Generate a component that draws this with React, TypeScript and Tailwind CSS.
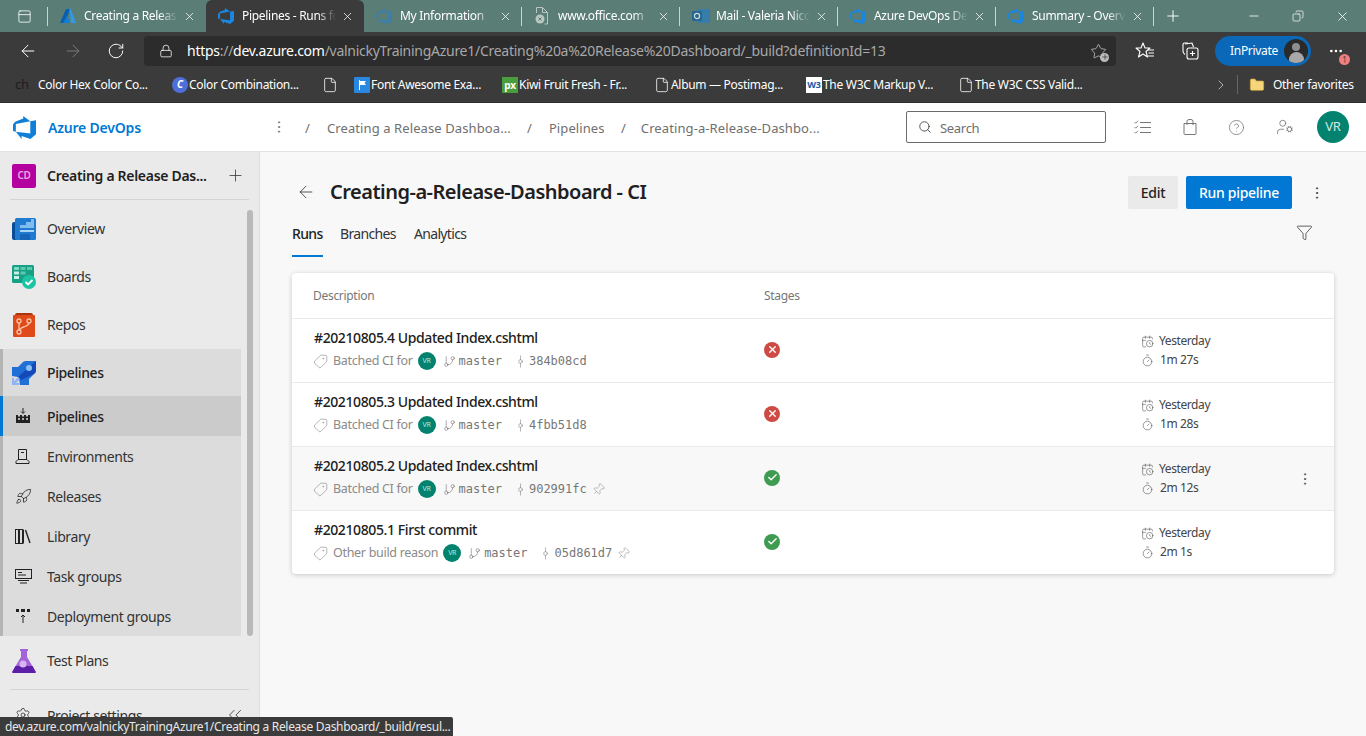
import React from "react";
import {
  ArrowLeft, ArrowRight, RotateCw, Lock, Star, Plus, Minus, X, Copy, File, Search,
  CircleHelp, UserCog, EllipsisVertical, Ellipsis, Funnel, Tag, GitBranch, GitCommitVertical, Pin, CalendarClock,
  Timer, Settings, ChevronsLeft, ChevronRight, Check, PanelTop, Rocket, Folder,
} from "lucide-react";

const DEVOPS = "M0 8.877L2.247 5.91l8.405-3.416V.022l7.37 5.393L2.966 8.338v8.225L0 15.707zm24-4.45v14.651l-5.753 4.9-9.303-3.057v3.056l-5.978-7.416 15.057 1.798V5.415z";

function DevOps({ size = 16, color = "#0f7fd8" }: { size?: number; color?: string }) {
  return (
    <svg width={size} height={size} viewBox="0 0 24 24" className="shrink-0">
      <path d={DEVOPS} fill={color} />
    </svg>
  );
}

function AzureA() {
  return (
    <svg width="16" height="16" viewBox="0 0 16 16" className="shrink-0">
      <path d="M6 1h4L5 15H0z" fill="#0a5fb0" />
      <path d="M9.5 1h1.2L16 15h-5z" fill="#2f9be8" />
      <path d="M7 8l3 7H3z" fill="#0f7fd8" />
    </svg>
  );
}

function OutlookIcon() {
  return (
    <svg width="18" height="16" viewBox="0 0 18 16" className="shrink-0 opacity-70">
      <rect x="5" y="1" width="13" height="14" rx="1" fill="#2b7cbf" />
      <rect x="0" y="3" width="10" height="10" rx="1" fill="#0f5f9e" />
      <circle cx="5" cy="8" r="2.6" fill="none" stroke="#fff" strokeWidth="1.2" />
    </svg>
  );
}

function BlockedFile() {
  return (
    <svg width="16" height="18" viewBox="0 0 16 18" fill="none" stroke="#b9c6c2" className="shrink-0">
      <path d="M2.5 6V.5h6l5 5V17h-3" />
      <path d="M8.5.5v5h5" />
      <circle cx="6" cy="12" r="4.5" fill="#b9c6c2" stroke="none" />
      <path d="M4.5 10.5l3 3M7.5 10.5l-3 3" stroke="#5a7d75" />
    </svg>
  );
}

function TabIcon({ kind }: { kind: string }) {
  if (kind === "azure") return <AzureA />;
  if (kind === "devops") return <DevOps size={16} color="#1a86e0" />;
  if (kind === "dim") return <DevOps size={16} color="#3d7fa8" />;
  if (kind === "outlook") return <OutlookIcon />;
  return <BlockedFile />;
}

const tabs = [
  { t: "Creating a Release Dashboard", k: "azure", sep: false },
  { t: "Pipelines - Runs for Creating", k: "devops", active: true, sep: false },
  { t: "My Information", k: "dim", sep: true },
  { t: "www.office.com", k: "file", sep: true },
  { t: "Mail - Valeria Nicolau", k: "outlook", sep: true },
  { t: "Azure DevOps Demo", k: "devops", sep: true },
  { t: "Summary - Overview", k: "devops", sep: true },
];

function BrowserTab({ t, k, active, sep }: { t: string; k: string; active?: boolean; sep?: boolean }) {
  return (
    <div className={`relative flex h-[32px] w-[158px] items-center pl-[12px] pr-[10px] ${active ? "rounded-t-[6px] bg-[#3b3b3b]" : ""}`}>
      <div className="flex w-[24px] shrink-0 items-center"><TabIcon kind={k} /></div>
      <div className="w-[94px] overflow-hidden whitespace-nowrap text-[12px] text-white [mask-image:linear-gradient(to_right,black_80%,transparent)]">{t}</div>
      <X size={13} strokeWidth={1.4} className="ml-auto shrink-0 text-white" />
      {sep ? <div className="absolute right-0 top-[7px] h-[19px] w-px bg-[#c7d6d2]" /> : null}
    </div>
  );
}

function TitleBar() {
  return (
    <div className="flex h-[32px] items-center bg-[#5a7d75]">
      <div className="flex w-[47px] items-center pl-[17px]"><PanelTop size={15} strokeWidth={1.3} className="text-white" /></div>
      <div className="h-[19px] w-px bg-[#c7d6d2]" />
      {tabs.map((x) => <BrowserTab key={x.t} {...x} />)}
      <Plus size={18} strokeWidth={1.3} className="ml-[10px] text-white" />
      <div className="ml-auto flex items-center gap-[31px] pr-[16px] text-white">
        <Minus size={14} strokeWidth={1.4} />
        <Copy size={12} strokeWidth={1.4} className="-scale-x-100" />
        <X size={15} strokeWidth={1.3} />
      </div>
    </div>
  );
}

function FavBar() {
  return (
    <svg width="20" height="20" viewBox="0 0 20 20" fill="none" stroke="#fff" strokeWidth="1.1" className="shrink-0">
      <path d="M8 2l2 5h5l-4 3.5 1.5 5.5L8 13l-4.5 3L5 10.5 1 7h5z" strokeLinejoin="round" />
      <path d="M13 9h6M13.5 12h5.5M13 15h6" />
    </svg>
  );
}

function CollectionsIcon() {
  return (
    <svg width="20" height="20" viewBox="0 0 20 20" fill="none" stroke="#fff" strokeWidth="1.1" className="shrink-0">
      <path d="M8 2H4.5A1.5 1.5 0 0 0 3 3.5V10c0 2 1 3 2 3.5" />
      <path d="M5 3l7-1 1.5 4" />
      <rect x="7" y="7" width="11" height="11" rx="2" />
      <path d="M12.5 10v5M10 12.5h5" />
    </svg>
  );
}

function Toolbar() {
  return (
    <div className="flex h-[38px] items-center bg-[#3b3b3b] text-white">
      <div className="flex w-[144px] shrink-0 items-center pl-[18px]">
        <ArrowLeft size={20} strokeWidth={1.2} />
        <ArrowRight size={20} strokeWidth={1.2} className="ml-[25px] text-[#7b7b7b]" />
        <RotateCw size={18} strokeWidth={1.3} className="ml-[24px]" />
      </div>
      <div className="flex h-[30px] w-[972px] items-center rounded-[4px] bg-[#2c2c2c] pl-[15px] pr-[9px]">
        <Lock size={14} strokeWidth={1.3} />
        <div className="mb-[2px] ml-[14px] whitespace-nowrap text-[14px] tracking-[-0.27px] text-[#a8a8a8]">
          <span className="text-white">https</span>://<span className="text-white">dev.azure.com</span>/valnickyTrainingAzure1/Creating%20a%20Release%20Dashboard/_build?definitionId=13
        </div>
        <div className="relative ml-auto">
          <Star size={17} strokeWidth={1.1} className="text-[#c8c8c8]" />
          <div className="absolute -bottom-[2px] -right-[2px] flex h-[9px] w-[9px] items-center justify-center rounded-full bg-[#bdbdbd]"><Plus size={8} strokeWidth={2} className="text-[#2c2c2c]" /></div>
        </div>
      </div>
      <div className="ml-[19px]"><FavBar /></div>
      <div className="ml-[25px]"><CollectionsIcon /></div>
      <div className="ml-[15px] flex h-[30px] w-[96px] items-center rounded-full bg-[#0b67b8] pl-[15px] pr-[3px]">
        <span className="mb-[1px] text-[12px]">InPrivate</span>
        <div className="ml-auto flex h-[24px] w-[24px] flex-col items-center overflow-hidden rounded-full bg-[#2a2a2a]">
          <div className="mt-[4px] h-[9px] w-[8px] rounded-full bg-[#8e8e8e]" />
          <div className="mt-[1px] h-[12px] w-[15px] rounded-t-full bg-[#a8a8a8]" />
        </div>
      </div>
      <div className="relative ml-[17px]">
        <Ellipsis size={16} strokeWidth={2} />
        <div className="absolute -bottom-[6px] -right-[6px] flex h-[11px] w-[11px] items-center justify-center rounded-full bg-[#f08080] text-[8px] leading-none text-[#3b3b3b]">1</div>
      </div>
    </div>
  );
}

function Fav({ kind }: { kind: string }) {
  if (kind === "doc") return <File size={16} strokeWidth={1.2} className="shrink-0 text-white" />;
  if (kind === "ch") return <span className="w-[22px] shrink-0 text-[13px] text-[#1b1b1b]">ch</span>;
  if (kind === "c") return <span className="flex h-[16px] w-[16px] shrink-0 items-center justify-center rounded-full bg-[#4f6fd8] text-[10px] font-bold italic text-white">C</span>;
  if (kind === "flag") return <span className="flex h-[16px] w-[16px] shrink-0 items-center justify-center rounded-[1px] bg-[#2b88e0]"><svg width="9" height="10" viewBox="0 0 9 10"><path d="M1 0h1v10H1zM2 1h6L6.5 3 8 5H2z" fill="#fff" /></svg></span>;
  if (kind === "px") return <span className="flex h-[16px] w-[16px] shrink-0 items-center justify-center bg-[#4a9d3f] text-[10px] font-bold leading-none text-white">px</span>;
  return <span className="flex h-[16px] w-[16px] shrink-0 items-center justify-center overflow-hidden bg-white text-[9px] font-bold leading-none text-[#1458a8]">W3</span>;
}

const bookmarks = [
  { k: "ch", t: "Color Hex Color Co...", w: "w-[172px]", pl: "pl-[15px]" },
  { k: "c", t: "Color Combination...", w: "w-[150px]", pl: "pl-0" },
  { k: "doc", t: "", w: "w-[32px]", pl: "pl-0" },
  { k: "flag", t: "Font Awesome Exa...", w: "w-[148px]", pl: "pl-0" },
  { k: "px", t: "Kiwi Fruit Fresh - Fr...", w: "w-[152px]", pl: "pl-0" },
  { k: "doc", t: "Album — Postimag...", w: "w-[152px]", pl: "pl-0" },
  { k: "w3", t: "The W3C Markup V...", w: "w-[152px]", pl: "pl-0" },
  { k: "doc", t: "The W3C CSS Valid...", w: "w-[255px]", pl: "pl-0" },
];

function Bookmarks() {
  return (
    <div className="flex h-[33px] items-center border-b border-[#2f2f2f] bg-[#3b3b3b] pb-[3px] text-[12px] text-white">
      {bookmarks.map((b, i) => (
        <div key={i} className={`flex shrink-0 items-center ${b.w} ${b.pl} gap-[1px]`}>
          <Fav kind={b.k} />
          {b.t ? <span className="whitespace-nowrap">{b.t}</span> : null}
        </div>
      ))}
      <ChevronRight size={16} strokeWidth={1.2} className="text-[#d0d0d0]" />
      <div className="ml-[8px] h-[19px] w-px bg-[#666]" />
      <Folder size={16} strokeWidth={1} fill="#f5d67a" className="ml-[11px] text-[#d8a838]" />
      <span className="ml-[8px] whitespace-nowrap">Other favorites</span>
    </div>
  );
}

function Crumb({ children }: { children: React.ReactNode }) {
  return <span className="whitespace-nowrap">{children}</span>;
}

function WorkItemsGlyph() {
  return (
    <svg width="17" height="15" viewBox="0 0 17 15" fill="none" stroke="#777" className="shrink-0">
      <path d="M6 2.5h11M6 7.5h11M6 12.5h11" />
      <path d="M0.5 2l1.2 1.2L4 0.8M0.5 7l1.2 1.2L4 5.8M0.5 12l1.2 1.2L4 10.8" strokeWidth="0.9" />
    </svg>
  );
}

function BagGlyph() {
  return (
    <svg width="14" height="16" viewBox="0 0 14 16" fill="none" stroke="#777" className="shrink-0">
      <path d="M1 4.5h12v10a1 1 0 0 1-1 1H2a1 1 0 0 1-1-1z" />
      <path d="M4 6V2.5a2 2 0 0 1 2-2h2a2 2 0 0 1 2 2V6" />
    </svg>
  );
}

function Header() {
  return (
    <div className="flex h-[49px] items-center border-b border-[#e2e2e2] bg-white">
      <div className="flex w-[271px] shrink-0 items-center pl-[13px]">
        <DevOps size={23} color="#0f7fd8" />
        <span className="ml-[12px] whitespace-nowrap text-[14px] font-semibold tracking-[-0.2px] text-[#0078d4]">Azure DevOps</span>
      </div>
      <EllipsisVertical size={16} strokeWidth={1.5} className="text-[#777]" />
      <div className="ml-[18px] flex w-[601px] items-center pt-[3px] text-[13px] tracking-[0.1px] text-[#6f6f6f]">
        <Crumb>/</Crumb><span className="ml-[17px] w-[200px] whitespace-nowrap"><Crumb>Creating a Release Dashboa...</Crumb></span>
        <Crumb>/</Crumb><span className="ml-[17px] w-[72px]"><Crumb>Pipelines</Crumb></span>
        <Crumb>/</Crumb><span className="ml-[15px]"><Crumb>Creating-a-Release-Dashbo...</Crumb></span>
      </div>
      <div className="flex h-[32px] w-[200px] items-center rounded-[2px] border border-[#6b6b6b] pl-[11px] text-[13px] text-[#6f6f6f]">
        <Search size={14} strokeWidth={1.4} className="text-[#333]" />
        <span className="ml-[8px] pt-[3px]">Search</span>
      </div>
      <div className="ml-[28px]"><WorkItemsGlyph /></div>
      <div className="ml-[32px]"><BagGlyph /></div>
      <CircleHelp size={17} strokeWidth={1.1} className="ml-[31px] text-[#777]" />
      <UserCog size={18} strokeWidth={1.1} className="ml-[31px] text-[#777]" />
      <div className="ml-[23px] flex h-[32px] w-[32px] items-center justify-center rounded-full bg-[#03836f] text-[13px] text-[#cfe8e3]">VR</div>
    </div>
  );
}

function OverviewIcon() {
  return (
    <svg width="24" height="22" viewBox="0 0 24 22" className="shrink-0">
      <path d="M0 6a2 2 0 0 1 2-2h4v18H2a2 2 0 0 1-2-2z" fill="#0a4d96" />
      <rect x="3" y="0" width="21" height="22" rx="1.5" fill="#1f7ad0" />
      <path d="M19 1h3v9H8V7h6V4h5z" fill="#7fbdf0" />
      <rect x="8" y="12" width="14" height="2" fill="#a8d4f5" />
      <rect x="8" y="16" width="10" height="6" fill="#1564b8" />
    </svg>
  );
}
function BoardsIcon() {
  return (
    <svg width="24" height="24" viewBox="0 0 24 24" className="shrink-0">
      <rect x="0" y="0" width="22" height="18" rx="1.5" fill="#16a085" />
      <rect x="2" y="2" width="5" height="3" fill="#7fd8c4" /><rect x="8.5" y="2" width="5" height="3" fill="#5cc8b0" /><rect x="15" y="2" width="5" height="3" fill="#5cc8b0" />
      <rect x="2" y="6.5" width="5" height="3" fill="#c8f0e6" /><rect x="8.5" y="6.5" width="5" height="3" fill="#5cc8b0" />
      <rect x="2" y="11" width="5" height="3" fill="#c8f0e6" />
      <circle cx="17" cy="17" r="7" fill="#1cc4a4" />
      <path d="M13.5 17l2.5 2.5 4.5-4.5" fill="none" stroke="#fff" strokeWidth="1.8" />
    </svg>
  );
}
function ReposIcon() {
  return (
    <svg width="24" height="24" viewBox="0 0 24 24" className="shrink-0">
      <path d="M3 2a2 2 0 0 1 2-2h14a2 2 0 0 1 2 2v2H3z" fill="#a83410" />
      <rect x="1" y="2" width="22" height="22" rx="1" fill="#e0491a" />
      <g fill="none" stroke="#f9c5a8" strokeWidth="1.3">
        <circle cx="7" cy="8" r="2" /><circle cx="7" cy="19" r="2" /><circle cx="17" cy="8" r="2" />
        <path d="M7 10v7M17 10c0 4-8 3-9.5 7" />
      </g>
    </svg>
  );
}
function PipelinesIcon() {
  return (
    <svg width="24" height="24" viewBox="0 0 24 24" className="shrink-0">
      <path d="M24 0v9c0 2-1 3-2 4l-5 5v6H8l-1-7-1-1-6-1V6h6l5-5c1-1 2-1 4-1z" fill="#1f6fd6" />
      <path d="M24 0v9c0 2-1 3-2 4L9 19l-3-3z" fill="#1349b8" />
      <circle cx="17" cy="7" r="3" fill="#8fc0f5" />
      <path d="M0 24v-7h2v3.5L6 16l2 2-4 4h3.5v2z" fill="#8fb4f5" />
    </svg>
  );
}
function TestPlansIcon() {
  return (
    <svg width="24" height="24" viewBox="0 0 24 24" className="shrink-0">
      <path d="M8 0h8v2h-1v6l9 15a1 1 0 0 1-1 1H1a1 1 0 0 1-1-1L9 8V2H8z" fill="#a463d8" />
      <path d="M3.5 17h17l3.2 6a1 1 0 0 1-1 1H1.3a1 1 0 0 1-1-1z" fill="#5d1fa8" />
      <circle cx="11" cy="15" r="3.5" fill="#d8b4f0" />
    </svg>
  );
}

function TopNav({ icon, label }: { icon: React.ReactNode; label: string }) {
  return (
    <div className="flex h-[48px] shrink-0 items-center pl-[12px] text-[14px] tracking-[-0.4px] text-[#333]">
      <div className="flex w-[35px] items-center">{icon}</div>
      <span className="mb-[2px]">{label}</span>
    </div>
  );
}

function PipelineGlyph() {
  return (
    <svg width="16" height="16" viewBox="0 0 16 16" className="text-[#222]">
      <path d="M8 0v5M6 3.5L8 5.5l2-2" fill="none" stroke="currentColor" />
      <path d="M1 7h2v1.5h2V7h2v1.5h2V7h2v1.5h2V7h2v8H1z" fill="currentColor" />
      <path d="M3 11h2M7 11h2M11 11h2" stroke="#dcdcdc" strokeWidth="1.5" />
    </svg>
  );
}
function EnvGlyph() {
  return (
    <svg width="15" height="15" viewBox="0 0 15 15" fill="none" stroke="#222">
      <path d="M3.5 10.5V.5h8v10M1 14.5h13v-2l-2-2H3l-2 2zM6 3.5h3" />
    </svg>
  );
}
function LibraryGlyph() {
  return (
    <svg width="16" height="15" viewBox="0 0 16 15" fill="none" stroke="#222">
      <rect x="0.5" y="0.5" width="3" height="14" /><rect x="4.5" y="0.5" width="3" height="14" /><path d="M8.5 0.5v14" />
      <path d="M10.5 1l4.5 13" strokeWidth="1.4" />
    </svg>
  );
}
function TaskGlyph() {
  return (
    <svg width="17" height="15" viewBox="0 0 17 15" fill="none" stroke="#222">
      <rect x="0.5" y="0.5" width="16" height="9" /><path d="M3 3.5h4M3 6h8M3 11.5h11M5 14h7" />
    </svg>
  );
}
function DeployGlyph() {
  return (
    <svg width="16" height="15" viewBox="0 0 16 15">
      <path d="M1 0h3v3H1zM6 0h4v3H6zM12 0h3v3h-3z" fill="#222" />
      <path d="M8 14V6M6 8l2-2 2 2" fill="none" stroke="#222" />
    </svg>
  );
}

const subs: { label: string; icon: React.ReactNode; active?: boolean }[] = [
  { label: "Pipelines", icon: <PipelineGlyph />, active: true },
  { label: "Environments", icon: <EnvGlyph /> },
  { label: "Releases", icon: <Rocket size={17} strokeWidth={1.1} className="text-[#222]" /> },
  { label: "Library", icon: <LibraryGlyph /> },
  { label: "Task groups", icon: <TaskGlyph /> },
  { label: "Deployment groups", icon: <DeployGlyph /> },
];

function Sidebar() {
  return (
    <div className="relative flex w-[260px] shrink-0 flex-col overflow-hidden border-r border-[#dedede] bg-[#eaeaea]">
      <div className="mx-[10px] flex h-[48px] shrink-0 items-center border-b border-[#d4d4d4] pl-[2px]">
        <div className="flex h-[24px] w-[24px] items-center justify-center rounded-[2px] bg-[#b4009e] text-[10px] font-semibold text-[#e9a8e0]">CD</div>
        <span className="ml-[11px] whitespace-nowrap text-[14px] font-semibold text-[#1f1f1f]">Creating a Release Das...</span>
        <Plus size={19} strokeWidth={1} className="ml-auto mr-[4px] text-[#333]" />
      </div>
      <div className="h-[5px] shrink-0" />
      <TopNav icon={<OverviewIcon />} label="Overview" />
      <TopNav icon={<BoardsIcon />} label="Boards" />
      <TopNav icon={<ReposIcon />} label="Repos" />
      <div className="w-[241px] shrink-0 border-l-[3px] border-[#b4b4b4] bg-[#dcdcdc] tracking-[-0.4px]">
        <div className="flex h-[47px] items-center pl-[9px] text-[14px] font-medium text-[#222]">
          <div className="flex w-[35px] items-center"><PipelinesIcon /></div>
          Pipelines
        </div>
        {subs.map((s) => (
          <div key={s.label} className={`relative flex h-[40px] items-center pl-[12px] text-[14px] ${s.active ? "bg-[#cbcbcb] font-medium text-[#222]" : "text-[#333]"}`}>
            {s.active ? <div className="absolute -left-[3px] top-0 h-full w-[3px] bg-[#0078d4]" /> : null}
            <div className="flex w-[32px] items-center">{s.icon}</div>
            {s.label}
          </div>
        ))}
      </div>
      <div className="mt-[1px] shrink-0"><TopNav icon={<TestPlansIcon />} label="Test Plans" /></div>
      <div className="mx-[10px] mt-[4px] shrink-0 border-t border-[#d4d4d4]" />
      <div className="flex h-[50px] shrink-0 items-center pl-[15px] text-[14px] tracking-[-0.4px] text-[#333]">
        <Settings size={16} strokeWidth={1.1} className="text-[#222]" />
        <span className="ml-[16px]">Project settings</span>
        <ChevronsLeft size={22} strokeWidth={0.9} className="ml-auto mr-[13px] text-[#333]" />
      </div>
      <div className="absolute left-[247px] top-[58px] h-[426px] w-[6px] rounded-full bg-[#b9b9b9]" />
    </div>
  );
}

function Status({ ok }: { ok: boolean }) {
  return (
    <div className={`flex h-[16px] w-[16px] items-center justify-center rounded-full ${ok ? "bg-[#3f9a52]" : "bg-[#cd4a45]"}`}>
      {ok ? <Check size={11} strokeWidth={3} className="text-white" /> : <X size={11} strokeWidth={3} className="text-white" />}
    </div>
  );
}

type Run = { id: string; title: string; reason: string; hash: string; ok: boolean; dur: string; pin?: boolean; hover?: boolean };
const runs: Run[] = [
  { id: "#20210805.4", title: "Updated Index.cshtml", reason: "Batched CI for", hash: "384b08cd", ok: false, dur: "1m 27s" },
  { id: "#20210805.3", title: "Updated Index.cshtml", reason: "Batched CI for", hash: "4fbb51d8", ok: false, dur: "1m 28s" },
  { id: "#20210805.2", title: "Updated Index.cshtml", reason: "Batched CI for", hash: "902991fc", ok: true, dur: "2m 12s", pin: true, hover: true },
  { id: "#20210805.1", title: "First commit", reason: "Other build reason", hash: "05d861d7", ok: true, dur: "2m 1s", pin: true },
];

function RunRow({ r }: { r: Run }) {
  return (
    <div className={`flex h-[64px] items-center border-t border-[#eaeaea] pl-[21px] ${r.hover ? "bg-[#f8f8f8]" : ""}`}>
      <div className="w-[451px] shrink-0 pb-[2px]">
        <div className="ml-[1px] whitespace-nowrap text-[14px] font-medium leading-[20px] tracking-[-0.4px] text-[#202020]">{r.id} {r.title}</div>
        <div className="mt-[3px] flex h-[20px] items-center whitespace-nowrap text-[12.5px] text-[#8a8a8a]">
          <Tag size={15} strokeWidth={1} className="-scale-x-100 text-[#888]" />
          <span className="ml-[5px]">{r.reason}</span>
          <div className="ml-[5px] flex h-[18px] w-[18px] items-center justify-center rounded-full bg-[#03836f] text-[7px] text-[#bfe3dc]">VR</div>
          <GitBranch size={13} strokeWidth={1} className="ml-[7px] text-[#666]" />
          <span className="ml-[3px] font-['DejaVu_Sans_Mono',monospace] text-[12px] tracking-normal text-[#777]">master</span>
          <GitCommitVertical size={15} strokeWidth={1} className="ml-[11px] text-[#888]" />
          <span className="ml-[1px] font-['DejaVu_Sans_Mono',monospace] text-[12px] tracking-normal text-[#777]">{r.hash}</span>
          {r.pin ? <Pin size={13} strokeWidth={1} className="ml-[5px] rotate-45 text-[#888]" /> : null}
        </div>
      </div>
      <div className="w-[377px] shrink-0 pb-[2px]"><Status ok={r.ok} /></div>
      <div className="flex flex-1 items-center justify-between pr-[21px] text-[12px] tracking-[-0.4px] text-[#444]">
        <div>
          <div className="flex h-[19px] items-center">
            <CalendarClock size={13} strokeWidth={1} className="text-[#444]" />
            <span className="ml-[5px]">Yesterday</span>
          </div>
          <div className="flex h-[19px] items-center">
            <Timer size={13} strokeWidth={1} className="text-[#444]" />
            <span className="ml-[6px]">{r.dur}</span>
          </div>
        </div>
        {r.hover ? <EllipsisVertical size={16} strokeWidth={1.5} className="text-[#555]" /> : null}
      </div>
    </div>
  );
}

function Main() {
  return (
    <div className="min-w-0 flex-1 bg-[#f8f8f8] pl-[32px] pr-[32px]">
      <div className="mt-[24px] flex h-[33px] items-center">
        <ArrowLeft size={20} strokeWidth={1} className="mb-[2px] ml-[4px] text-[#333]" />
        <span className="mb-[2px] ml-[14px] whitespace-nowrap text-[20px] font-semibold tracking-[-0.5px] text-[#202020]">Creating-a-Release-Dashboard - CI</span>
        <div className="ml-auto flex h-[33px] w-[50px] items-center justify-center rounded-[2px] bg-[#eaeaea] text-[14px] font-medium text-[#222]">Edit</div>
        <div className="ml-[8px] flex h-[33px] w-[106px] items-center justify-center rounded-[2px] bg-[#0078d4] text-[14px] font-medium text-white">Run pipeline</div>
        <EllipsisVertical size={16} strokeWidth={1.5} className="ml-[17px] mr-[9px] text-[#444]" />
      </div>
      <div className="mt-[2px] flex h-[46px] items-center text-[14px] tracking-[-0.65px] text-[#333]">
        <div className="flex h-full w-[48px] flex-col items-start justify-center">
          <span className="relative flex h-full items-center pb-[2px] font-medium text-[#222]">Runs<span className="absolute bottom-0 left-0 h-[2px] w-[31px] bg-[#0078d4]" /></span>
        </div>
        <span className="mb-[2px]">Branches</span>
        <span className="mb-[2px] ml-[18px]">Analytics</span>
        <Funnel size={17} strokeWidth={1} className="mb-[4px] ml-auto mr-[21px] text-[#222]" />
      </div>
      <div className="mt-[16px] overflow-hidden rounded-[4px] bg-white shadow-[0_1px_5px_rgba(0,0,0,0.2)]">
        <div className="flex h-[45px] items-center pl-[21px] text-[12px] text-[#777]">
          <span className="w-[451px]">Description</span>
          <span>Stages</span>
        </div>
        {runs.map((r) => <RunRow key={r.id} r={r} />)}
      </div>
    </div>
  );
}

export default function App() {
  return (
    <div className="relative flex h-[736px] w-[1366px] flex-col overflow-hidden bg-[#f8f8f8] font-['Noto_Sans',sans-serif] tracking-[-0.3px]">
      <TitleBar />
      <Toolbar />
      <Bookmarks />
      <Header />
      <div className="flex min-h-0 flex-1">
        <Sidebar />
        <Main />
      </div>
      <div className="absolute bottom-0 left-0 flex h-[19px] w-[453px] items-center rounded-tr-[2px] bg-[#3b3b3b] pl-[5px] text-[12px] text-[#e8e8e8]">
        <span className="whitespace-nowrap">dev.azure.com/valnickyTrainingAzure1/Creating a Release Dashboard/_build/resul...</span>
      </div>
    </div>
  );
}
